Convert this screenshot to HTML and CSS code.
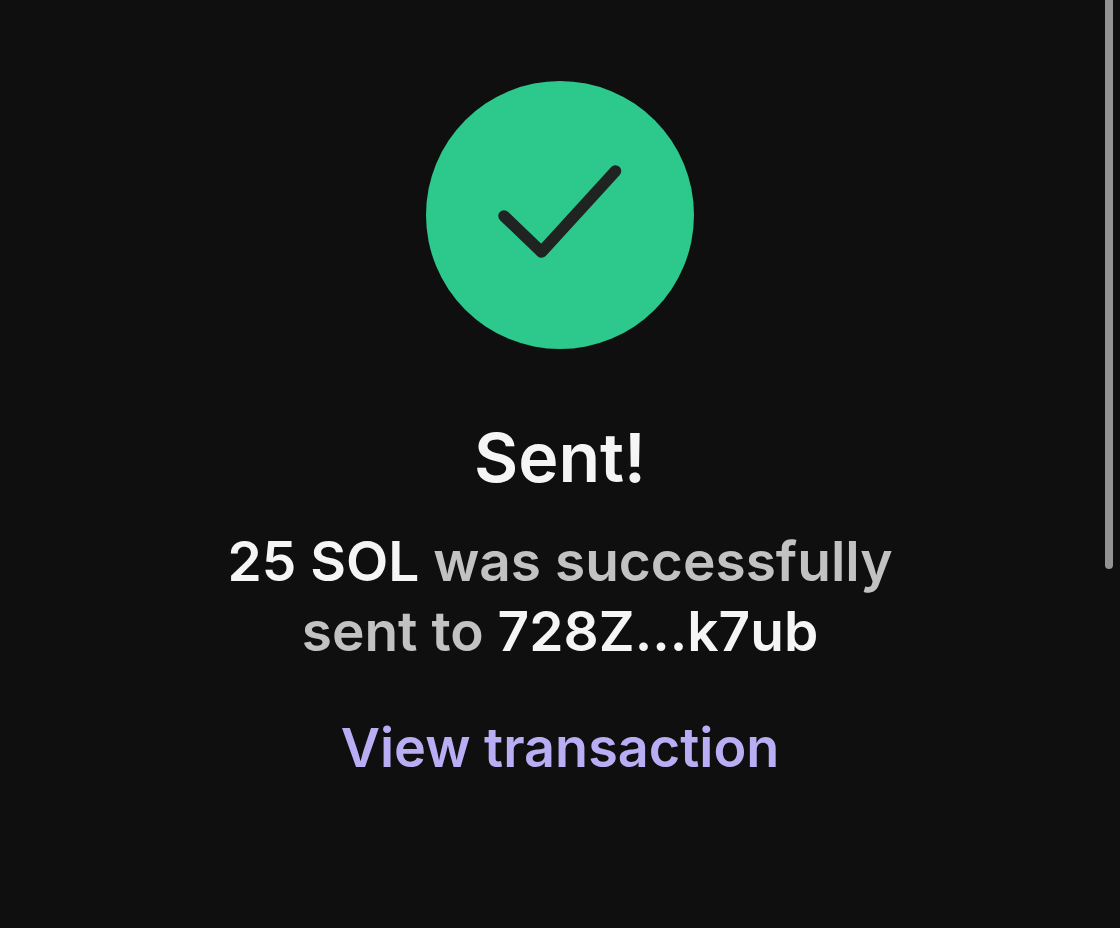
FILE: index.html
```html
<!DOCTYPE html>
<html lang="en">
<head>
  <meta charset="UTF-8">
  <meta name="viewport" content="width=device-width, initial-scale=1.0">
  <title>Sent</title>
  <link rel="stylesheet" href="styles.css">
</head>
<body>
  <main class="result">
    <svg class="status-icon" viewBox="0 0 268 268" aria-hidden="true">
      <circle cx="134" cy="134" r="134" fill="#2dc88c"/>
      <path d="M78 135 L115.500 171 L189.500 90" fill="none" stroke="#1f2322" stroke-width="11.500" stroke-linecap="round" stroke-linejoin="round"/>
    </svg>
    <h1 class="title">Sent!</h1>
    <p class="message"><strong>25 SOL</strong> was successfully<br>sent to <strong>728Z...k7ub</strong></p>
    <a class="link" href="#">View transaction</a>
  </main>
  <div class="scrollbar"></div>
</body>
</html>
```

FILE: styles.css
```css
body {
  margin: 0;
  min-height: 100vh;
  background: #0f0f0f;
  color: #f5f5f5;
  font-family: Inter, "Liberation Sans", sans-serif;
}

.result {
  display: flex;
  flex-direction: column;
  align-items: center;
  padding: 81px 24px 0;
  text-align: center;
}

.status-icon {
  width: 268px;
  height: 268px;
}

.title {
  margin: 68px 0 0;
  font-size: 68px;
  font-weight: 600;
  line-height: 80px;
}

.message {
  margin: 29px 0 0;
  color: #c2c2c2;
  font-size: 55px;
  font-weight: 600;
  line-height: 70px;
}

.message strong {
  color: #f5f5f5;
  font-weight: 600;
}

.link {
  margin-top: 47px;
  color: #b9adf4;
  font-size: 54px;
  font-weight: 600;
  line-height: 70px;
  text-decoration: none;
}

/* scroll thumb lies over the right edge */
.scrollbar {
  position: absolute;
  top: 0;
  right: 7px;
  width: 8px;
  height: 569px;
  border-radius: 0 0 4px 4px;
  background: #939393;
}
```
